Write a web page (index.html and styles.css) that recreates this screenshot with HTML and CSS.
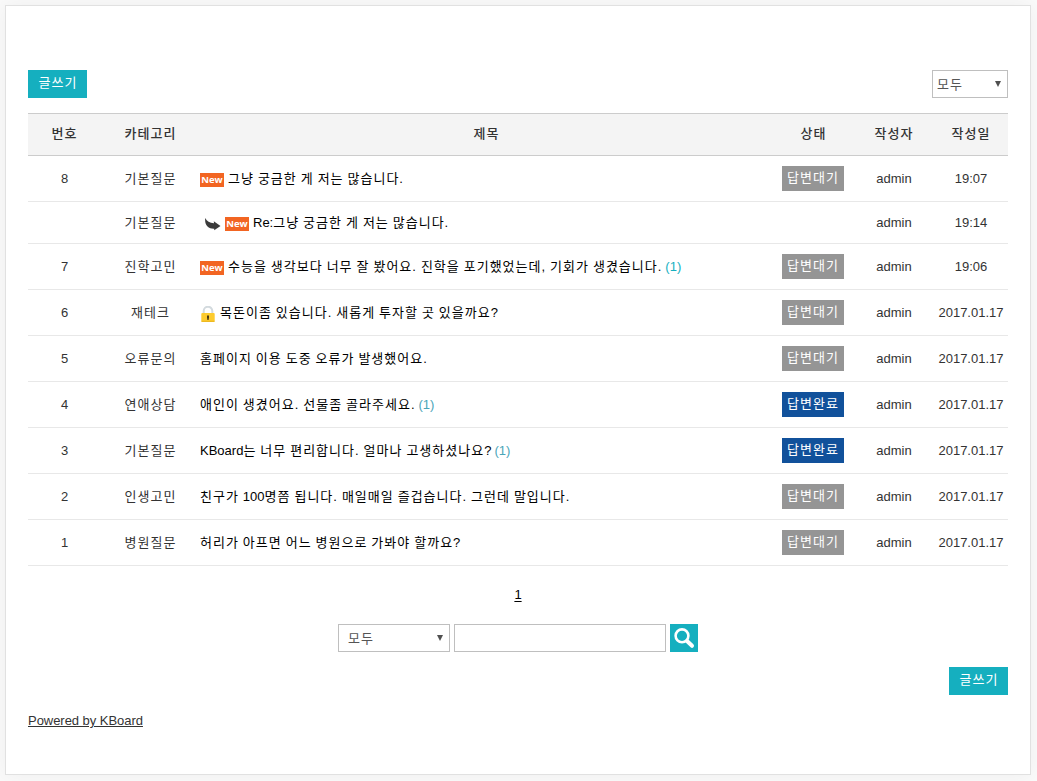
FILE: index.html
```html
<!DOCTYPE html>
<html lang="ko">
<head>
<meta charset="utf-8">
<title>KBoard</title>
<link rel="stylesheet" href="styles.css">
</head>
<body>
<main class="board">
  <div class="toolbar">
    <button class="write ko">글쓰기</button>
    <div class="select category"><span class="ko">모두</span><i class="caret"></i></div>
  </div>
  <table class="list">
    <colgroup><col class="c-num"><col class="c-cat"><col class="c-title"><col class="c-status"><col class="c-author"><col class="c-date"></colgroup>
    <thead><tr class="ko"><th>번호</th><th>카테고리</th><th>제목</th><th>상태</th><th>작성자</th><th>작성일</th></tr></thead>
    <tbody>
      <tr><td>8</td><td class="ko">기본질문</td><td class="title"><div class="subject"><b class="new">New</b><span class="ko">그냥 궁금한 게 저는 많습니다.</span></div></td><td class="status"><span class="badge ko">답변대기</span></td><td>admin</td><td>19:07</td></tr>
      <tr class="reply"><td></td><td class="ko">기본질문</td><td class="title"><div class="subject"><svg class="arrow" viewBox="0 0 16 13"><path d="M.2 0C2 3.400 4.500 5 9 5.200L8.800 3.200 15.500 8 9.200 12.200V10.800C3.500 11 -.6 7.500.2 0Z" fill="#3b3b3b"/></svg><b class="new">New</b><span class="ko"><span class="la">Re:</span>그냥 궁금한 게 저는 많습니다.</span></div></td><td class="status"></td><td>admin</td><td>19:14</td></tr>
      <tr><td>7</td><td class="ko">진학고민</td><td class="title"><div class="subject"><b class="new">New</b><span class="ko">수능을 생각보다 너무 잘 봤어요. 진학을 포기했었는데, 기회가 생겼습니다.</span><span class="count bright">(1)</span></div></td><td class="status"><span class="badge ko">답변대기</span></td><td>admin</td><td>19:06</td></tr>
      <tr><td>6</td><td class="ko">재테크</td><td class="title"><div class="subject"><svg class="lock" viewBox="0 0 14 16"><path d="M2.700 8V5a4.300 4.300 0 0 1 8.600 0V8" fill="none" stroke="#d3dade" stroke-width="2"/><rect x=".3" y="7" width="13.400" height="9" rx="1" fill="#fdcb2e"/><path d="M.5 15.300H13.500" stroke="#e9b51e"/><path d="M6 9.500H8V11.500L7.600 14H6.400L6 11.500Z" fill="#4c3b12"/></svg><span class="ko">목돈이좀 있습니다. 새롭게 투자할 곳 있을까요<span class="la">?</span></span></div></td><td class="status"><span class="badge ko">답변대기</span></td><td>admin</td><td>2017.01.17</td></tr>
      <tr><td>5</td><td class="ko">오류문의</td><td class="title"><div class="subject"><span class="ko">홈페이지 이용 도중 오류가 발생했어요.</span></div></td><td class="status"><span class="badge ko">답변대기</span></td><td>admin</td><td>2017.01.17</td></tr>
      <tr><td>4</td><td class="ko">연애상담</td><td class="title"><div class="subject"><span class="ko">애인이 생겼어요. 선물좀 골라주세요.</span><span class="count">(1)</span></div></td><td class="status"><span class="badge done ko">답변완료</span></td><td>admin</td><td>2017.01.17</td></tr>
      <tr><td>3</td><td class="ko">기본질문</td><td class="title"><div class="subject"><span class="ko"><span class="la">KBoard</span>는 너무 편리합니다. 얼마나 고생하셨나요<span class="la">?</span></span><span class="count">(1)</span></div></td><td class="status"><span class="badge done ko">답변완료</span></td><td>admin</td><td>2017.01.17</td></tr>
      <tr><td>2</td><td class="ko">인생고민</td><td class="title"><div class="subject"><span class="ko">친구가 <span class="la">100</span>명쯤 됩니다. 매일매일 즐겁습니다. 그런데 말입니다.</span></div></td><td class="status"><span class="badge ko">답변대기</span></td><td>admin</td><td>2017.01.17</td></tr>
      <tr><td>1</td><td class="ko">병원질문</td><td class="title"><div class="subject"><span class="ko">허리가 아프면 어느 병원으로 가봐야 할까요<span class="la">?</span></span></div></td><td class="status"><span class="badge ko">답변대기</span></td><td>admin</td><td>2017.01.17</td></tr>
    </tbody>
  </table>
  <nav class="pages"><a class="page">1</a></nav>
  <form class="search">
    <div class="select target"><span class="ko">모두</span><i class="caret"></i></div>
    <input class="keyword" type="text">
    <button class="go" type="button"><svg viewBox="0 0 28 28" width="28" height="28"><circle cx="12" cy="11.800" r="6.400" fill="none" stroke="#fff" stroke-width="2.600"/><path d="M17 17L22 21.800" stroke="#fff" stroke-width="4" stroke-linecap="round"/></svg></button>
  </form>
  <div class="bottom"><button class="write ko">글쓰기</button></div>
  <footer><a class="powered">Powered by KBoard</a></footer>
</main>
</body>
</html>
```
FILE: styles.css
```css
* { box-sizing: border-box; }
body {
  margin: 0;
  padding: 5px 6px 6px 5px;
  background: #fafafa;
  color: #333;
  font: 13px/21px "Liberation Sans", "Noto Sans CJK KR", sans-serif;
}
.board {
  height: 770px;
  padding: 64px 22px 0;
  background: #fff;
  border: 1px solid #e1e1e1;
  box-shadow: 0 0 20px rgba(0, 0, 0, .05);
}
.ko { letter-spacing: 1px; word-spacing: -.65px; }
.la { letter-spacing: 0; }
.toolbar { display: flex; justify-content: space-between; height: 28px; }
.write {
  width: 59px;
  height: 28px;
  padding: 0 0 3px 1px;
  border: 0;
  background: #15afbf;
  color: #fff;
  font-family: inherit;
  font-size: 13px;
  line-height: 21px;
}
.select {
  display: flex;
  align-items: center;
  justify-content: space-between;
  height: 28px;
  border: 1px solid #bfbfbf;
  background: #fff;
  color: #555;
}
.category { width: 76px; padding: 0 6px 0 4px; }
.target { width: 112px; padding: 0 6px 0 9px; }
.caret {
  margin-top: -1px;
  border: 3px solid transparent;
  border-top: 6px solid #505050;
  border-bottom: 0;
}
.list {
  width: 980px;
  margin-top: 15px;
  table-layout: fixed;
  border-collapse: separate;
  border-spacing: 0;
}
.c-num { width: 72px; }
.c-cat { width: 100px; }
.c-title { width: 572px; }
.c-status { width: 82px; }
.c-author { width: 79px; }
.c-date { width: 75px; }
th {
  height: 43px;
  padding: 0 0 2px 1px;
  border-top: 1px solid #ccc;
  border-bottom: 1px solid #ccc;
  background: #f4f4f4;
  font-weight: 500;
}
td {
  height: 46px;
  padding: 0 0 0 1px;
  border-bottom: 1px solid #e8e8e8;
  text-align: center;
  vertical-align: middle;
}
.status { padding: 0; }
.reply td { height: 42px; }
.title { padding: 0; color: #000; text-align: left; }
.subject { display: flex; align-items: center; white-space: nowrap; }
.new {
  width: 24px;
  height: 14px;
  margin: 3px 4px 0 0;
  background: #f26522;
  color: #fff;
  font-family: "Open Sans", sans-serif;
  font-size: 9.500px;
  line-height: 14px;
  text-align: center;
}
.arrow { width: 16px; height: 13px; margin: 3px 4px 0 5px; }
.lock { width: 14px; height: 16px; margin: 3px 5px 0 1px; }
.count { margin-left: 3px; color: #4aa5b8; }
.bright { color: #15afbf; }
.badge {
  display: block;
  width: 62px;
  height: 25px;
  margin: 0 auto;
  background: #959595;
  color: #fff;
  line-height: 24px;
}
.done { background: #11519b; }
.pages { display: flex; justify-content: center; margin-top: 18px; height: 40px; }
.page { color: #000; text-decoration: underline; text-underline-offset: 2px; }
.search { display: flex; justify-content: center; gap: 4px; height: 28px; }
.keyword { width: 212px; height: 28px; border: 1px solid #bfbfbf; background: #fff; }
.go { width: 28px; height: 28px; padding: 0; border: 0; background: #15afbf; }
.go svg { display: block; }
.bottom { display: flex; justify-content: flex-end; margin-top: 15px; }
footer { margin-top: 15px; }
.powered { letter-spacing: -.04px; text-decoration: underline; text-underline-offset: 1px; }
```
